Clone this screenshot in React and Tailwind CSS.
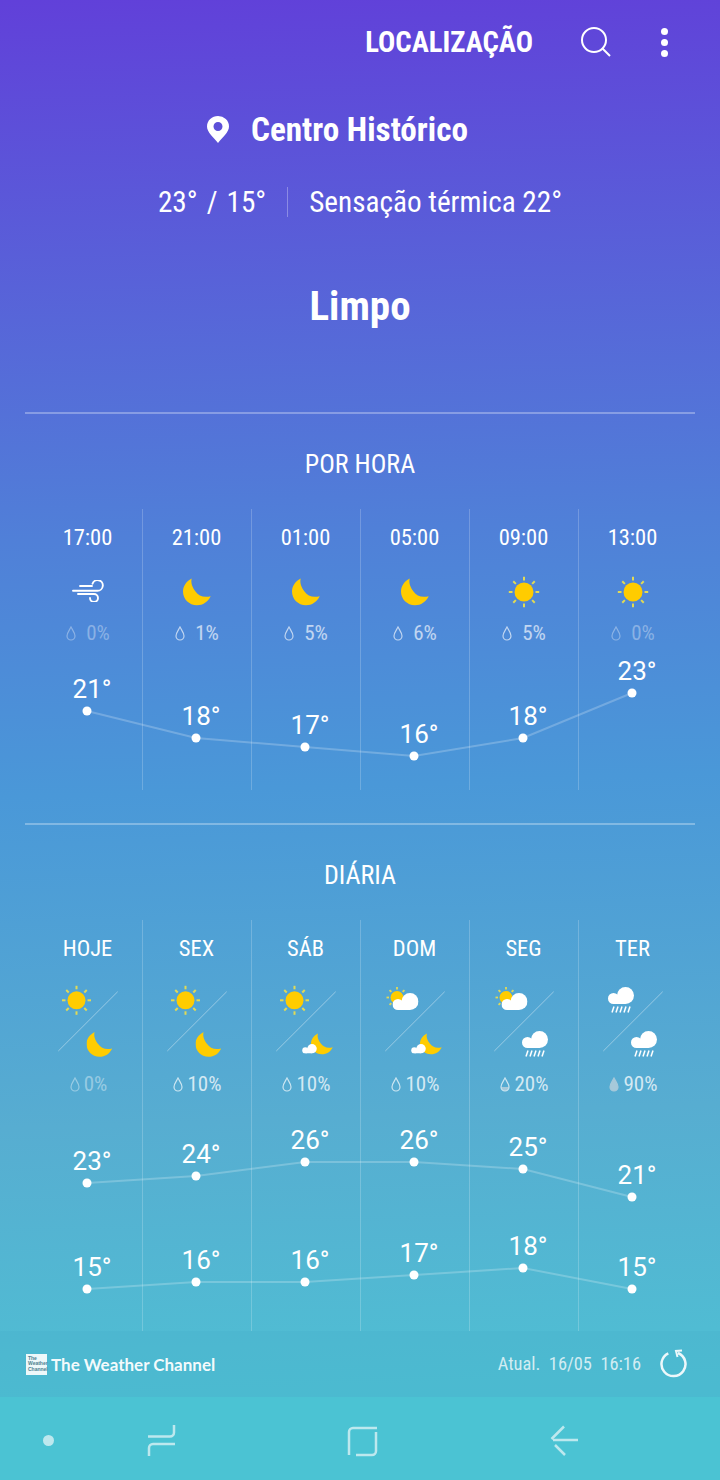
const SUN = "#ffcc00";
const RAY = "#e2da55";

function Sun({ cx, cy, r = 9.5, r1 = 11.5, r2 = 15.2, sw = 2 }) {
  const rays = [0, 45, 90, 135, 180, 225, 270, 315];
  return (
    <g>
      {rays.map((a) => {
        const t = (a * Math.PI) / 180;
        return (
          <line key={a} x1={cx + r1 * Math.cos(t)} y1={cy + r1 * Math.sin(t)} x2={cx + r2 * Math.cos(t)} y2={cy + r2 * Math.sin(t)} stroke={RAY} strokeWidth={sw} />
        );
      })}
      <circle cx={cx} cy={cy} r={r} fill={SUN} />
    </g>
  );
}

function Moon({ x, y, w = 28, h = 28 }) {
  return (
    <svg x={x} y={y} width={w} height={h} viewBox="0 0 28 27">
      <path d="M8.7 0C3 3 0 8 0 13c0 7.6 6 13.7 14 13.700 6 0 11-3.400 13.700-9C21 19.500 15.500 17.500 12.500 13 9.500 9 7.500 4.500 8.700 0Z" fill={SUN} />
    </svg>
  );
}

function Cloud({ x, y, w = 26, h = 17, opacity = 1 }) {
  return (
    <svg x={x} y={y} width={w} height={h} viewBox="0 0 26 17">
      <g fill="#fff" opacity={opacity}>
        <circle cx="5.500" cy="11.500" r="5.500" />
        <circle cx="17.500" cy="8.500" r="8.500" />
        <rect x="5.500" y="9" width="12" height="8" />
      </g>
    </svg>
  );
}

function Rain({ x, y }) {
  return (
    <g stroke="#fff" strokeWidth="1.500">
      {[0, 4, 8, 12, 16].map((d) => (
        <line key={d} x1={x + d} y1={y + 6} x2={x + d + 2} y2={y} />
      ))}
    </g>
  );
}

function Wind() {
  return (
    <svg width="32" height="22" viewBox="0 0 32 22" fill="none" stroke="#fff" strokeWidth="1.900" strokeLinecap="round" className="mb-[2px]">
      <path d="M1 10.700H25.500a5.300 5.300 0 1 0-5-7" />
      <path d="M8 6H20" />
      <path d="M6 14H22a4 4 0 1 1-4 4" />
    </svg>
  );
}

function Drop({ fill = 0, opacity = 0.65 }) {
  const d = "M5 1C3.500 4 1 6.800 1 10a4 4 0 0 0 8 0C9 6.800 6.500 4 5 1Z";
  return (
    <svg width="10" height="15" viewBox="0 0 10 15" style={{ opacity }}>
      {fill === 1 && <path d={d} fill="#c9d6de" stroke="#c9d6de" strokeWidth="1.200" />}
      {fill === 0.3 && <path d="M1.100 10a3.900 3.900 0 0 0 7.800 0Z" fill="#c9d6de" />}
      {fill !== 1 && <path d={d} fill="none" stroke="#fff" strokeWidth="1.200" />}
    </svg>
  );
}

function HourIcon({ type }) {
  if (type === "wind") return <Wind />;
  if (type === "moon") {
    return (
      <svg width="28" height="28" viewBox="0 0 28 28">
        <Moon x={0} y={0} />
      </svg>
    );
  }
  return (
    <svg width="32" height="32" viewBox="0 0 32 32">
      <Sun cx={16} cy={16} />
    </svg>
  );
}

function SunCloud({ x = 64.500, y = 993 }) {
  return (
    <g>
      <Sun cx={x + 4.500} cy={y + 4.500} r={6.500} r1={8} r2={10.500} sw={1.800} />
      <Cloud x={x} y={y} w={26} h={17} />
    </g>
  );
}

function DayIcon({ top, bottom }) {
  return (
    <svg width="80" height="76" viewBox="47 985 80 76" className="mt-[9px]">
      <line x1="57.300" y1="1051" x2="116.700" y2="991.700" stroke="#fff" strokeOpacity="0.4" strokeWidth="1" />
      {top === "sun" && <Sun cx={75.500} cy={1000.300} r={9} r1={11} r2={14.500} />}
      {top === "suncloud" && <SunCloud />}
      {top === "rain" && (
        <g>
          <Cloud x={62} y={987} />
          <Rain x={66} y={1006.500} />
        </g>
      )}
      {bottom === "moon" && <Moon x={85.500} y={1031.500} w={26} h={26} />}
      {bottom === "mooncloud" && (
        <g>
          <Moon x={92} y={1033} w={22} h={22} />
          <Cloud x={83} y={1044} w={15} h={9.500} />
        </g>
      )}
      {bottom === "rain" && (
        <g>
          <Cloud x={85} y={1031} />
          <Rain x={89} y={1050.500} />
        </g>
      )}
    </svg>
  );
}

const CX = [87, 196, 305, 414, 523, 632];

function Chart({ series, top }) {
  return (
    <div className="absolute inset-0">
      <svg width="720" height="100%" className="absolute left-[-33px] top-0">
        {series.map((ys, s) => (
          <g key={s}>
            <polyline points={ys.map((y, i) => `${CX[i]},${y - top}`).join(" ")} fill="none" stroke="#fff" strokeOpacity="0.22" strokeWidth="2" />
            {ys.map((y, i) => (
              <circle key={i} cx={CX[i]} cy={y - top} r="4.500" fill="#fff" />
            ))}
          </g>
        ))}
      </svg>
      {series.map((ys, s) =>
        ys.map((y, i) => (
          <Temp key={`${s}-${i}`} left={CX[i] - 33 + 5} top={y - top - 22} value={LABELS[top][s][i]} />
        ))
      )}
    </div>
  );
}

const LABELS = {
  509: [["21°", "18°", "17°", "16°", "18°", "23°"]],
  920: [
    ["23°", "24°", "26°", "26°", "25°", "21°"],
    ["15°", "16°", "16°", "17°", "18°", "15°"],
  ],
};

function Temp({ left, top, value }) {
  return (
    <div
      className="absolute w-[60px] -translate-x-1/2 -translate-y-1/2 text-center font-['Roboto',sans-serif] text-[26px] leading-[30px] text-white [font-stretch:100%]"
      style={{ left, top }}
    >
      {value}
    </div>
  );
}

function Title({ children }) {
  return <div className="text-center text-[26px] leading-[30px] text-white">{children}</div>;
}

function Precip({ value, fill, dropOpacity, textClass, gap }) {
  return (
    <div className={`flex items-center justify-center ${gap}`}>
      <Drop fill={fill} opacity={dropOpacity} />
      <span className={`text-[21px] leading-[28px] ${textClass}`}>{value}</span>
    </div>
  );
}

const hours = [
  { t: "17:00", i: "wind", p: "0%", dim: true },
  { t: "21:00", i: "moon", p: "1%" },
  { t: "01:00", i: "moon", p: "5%" },
  { t: "05:00", i: "moon", p: "6%" },
  { t: "09:00", i: "sun", p: "5%" },
  { t: "13:00", i: "sun", p: "0%", dim: true },
];

const days = [
  { t: "HOJE", a: "sun", b: "moon", p: "0%", dim: true },
  { t: "SEX", a: "sun", b: "moon", p: "10%" },
  { t: "SÁB", a: "sun", b: "mooncloud", p: "10%" },
  { t: "DOM", a: "suncloud", b: "mooncloud", p: "10%" },
  { t: "SEG", a: "suncloud", b: "rain", p: "20%", fill: 0.3 },
  { t: "TER", a: "rain", b: "rain", p: "90%", fill: 1 },
];

function Col({ first, children }) {
  return <div className={`flex flex-col items-center ${first ? "" : "border-l border-white/20 pr-px"}`}>{children}</div>;
}

export default function App() {
  return (
    <div className="h-[1480px] w-[720px] overflow-hidden bg-[linear-gradient(178deg,#6140d9_0%,#5080d8_36%,#4a98d8_53%,#57add1_75%,#50bcd3_90%,#4bc3d3_100%)] font-['Roboto',sans-serif] text-white [font-stretch:75%]">
      {/* top bar */}
      <div className="flex h-[84px] items-center justify-end">
        <span className="text-[28.700px] font-bold leading-[32px]">LOCALIZAÇÃO</span>
        <svg width="32" height="32" viewBox="0 0 32 32" fill="none" stroke="#fff" strokeWidth="2" className="ml-[47px]">
          <circle cx="14" cy="14" r="12" />
          <path d="M22.500 22.500 30 30" />
        </svg>
        <div className="ml-[49px] mr-[52px] flex flex-col gap-[4px]">
          <div className="h-[7px] w-[7px] rounded-full bg-white" />
          <div className="h-[7px] w-[7px] rounded-full bg-white" />
          <div className="h-[7px] w-[7px] rounded-full bg-white" />
        </div>
      </div>

      {/* location */}
      <div className="flex h-[90px] items-center justify-center gap-[22px] pr-[45px]">
        <svg width="22" height="27" viewBox="0 0 22 27">
          <path fillRule="evenodd" d="M11 27C7 21.500 0 16.500 0 10.500a11 10.500 0 0 1 22 0C22 16.500 15 21.500 11 27Zm0-12a4.500 4.500 0 1 0 0-9 4.500 4.500 0 0 0 0 9Z" fill="#fff" />
        </svg>
        <span className="pt-[2px] text-[33.200px] font-bold leading-[40px]">Centro Histórico</span>
      </div>
      <div className="flex h-[56px] items-center justify-center gap-[21px] text-[29.200px] leading-[34px]">
        <div className="flex gap-[9px]">
          <span>23°</span>
          <span>/</span>
          <span>15°</span>
        </div>
        <div className="h-[30px] w-px bg-white/30" />
        <span>Sensação térmica 22°</span>
      </div>
      <div className="flex h-[152px] items-center justify-center text-[41px] font-bold leading-[48px]">Limpo</div>
      <div className="h-[30px]" />

      {/* hourly */}
      <div className="mx-[25px] h-[2px] bg-white/30" />
      <div className="flex h-[95px] items-center justify-center pt-[4px]">
        <Title>POR HORA</Title>
      </div>
      <div className="relative mx-[33px] grid h-[281px] grid-cols-6">
        {hours.map((h, i) => (
          <Col key={h.t} first={i === 0}>
            <div className="flex h-[56px] items-center text-[22.500px] leading-[28px]">{h.t}</div>
            <div className="flex h-[54px] items-center justify-center">
              <HourIcon type={h.i} />
            </div>
            <div className="ml-[1px] flex h-[28px] items-center">
              <Precip value={h.p} dropOpacity={h.dim ? 0.35 : 0.65} textClass={h.dim ? "text-white/35" : "text-white/65"} gap="gap-[10px]" />
            </div>
          </Col>
        ))}
        <Chart top={509} series={[[711, 738, 747, 756, 738, 693]]} />
      </div>
      <div className="h-[33px]" />

      {/* daily */}
      <div className="mx-[25px] h-[2px] bg-white/30" />
      <div className="flex h-[95px] items-center justify-center pt-[4px]">
        <Title>DIÁRIA</Title>
      </div>
      <div className="relative mx-[33px] grid h-[411px] grid-cols-6">
        {days.map((d, i) => (
          <Col key={d.t} first={i === 0}>
            <div className="flex h-[56px] items-center text-[22.500px] leading-[28px]">{d.t}</div>
            <div className="flex h-[94px] w-full items-start justify-center">
              <DayIcon top={d.a} bottom={d.b} />
            </div>
            <div className="ml-[2px] flex h-[28px] items-center">
              <Precip value={d.p} fill={d.fill} dropOpacity={d.dim ? 0.4 : 0.7} textClass={d.dim ? "text-white/40" : "text-white/75"} gap="gap-[4px]" />
            </div>
          </Col>
        ))}
        <Chart
          top={920}
          series={[
            [1183, 1176, 1162, 1162, 1169, 1197],
            [1289, 1282, 1282, 1275, 1268, 1289],
          ]}
        />
      </div>

      {/* footer */}
      <div className="flex h-[66px] items-center bg-[#3fa9c6]/20 pl-[26px] pr-[33px]">
        <div className="flex h-[21px] w-[21px] flex-col justify-center bg-white/90 pl-[2px] font-['Liberation_Sans',sans-serif] text-[5px] font-bold leading-[5.500px] text-[#4d7f90] [font-stretch:100%]">
          <span>The</span>
          <span>Weather</span>
          <span>Channel</span>
        </div>
        <span className="ml-[4px] pt-[1px] font-['Lato',sans-serif] text-[17px] font-bold leading-[22px] text-white/95 [font-stretch:100%]">The Weather Channel</span>
        <span className="ml-auto whitespace-pre text-[18.400px] leading-[24px] text-white/75">Atual.  16/05  16:16</span>
        <svg width="28" height="30" viewBox="0 0 28 30" fill="none" stroke="#fff" strokeOpacity="0.9" strokeWidth="2.500" className="ml-[18px]">
          <path d="M9.300 4.300A12 12 0 1 0 19 4" />
          <path d="M23 1.500 17 2 18.500 8" strokeWidth="2" />
        </svg>
      </div>

      {/* navigation */}
      <div className="flex h-[83px] items-center bg-[#4bc3d3]">
        <svg width="720" height="83" viewBox="0 1397 720 83" fill="none" stroke="#bde8ee" strokeWidth="2.500">
          <circle cx="48.500" cy="1440.500" r="5.500" fill="#bde8ee" stroke="none" />
          <path d="M148 1436.500h22a4 4 0 0 0 4-4V1425" />
          <path d="M175 1444h-22a4 4 0 0 0-4 4v8" />
          <path d="M349 1455v-23a4 4 0 0 1 4-4h24" />
          <path d="M376 1432v19a4 4 0 0 1-4 4h-16" />
          <path d="M578 1440h-25" />
          <path d="M564 1426.500 551.500 1439" />
          <path d="M555 1445l10 10" />
        </svg>
      </div>
    </div>
  );
}
